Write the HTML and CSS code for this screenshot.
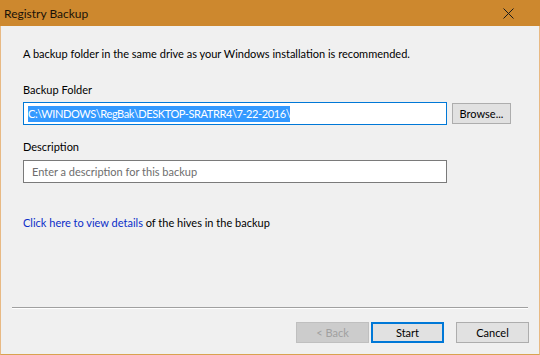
FILE: index.html
```html
<!DOCTYPE html>
<html>
<head>
<meta charset="utf-8">
<link rel="stylesheet" href="styles.css">
</head>
<body>
<div class="window">
  <div class="titlebar">
    <span class="title">Registry Backup</span>
    <svg class="close" width="11" height="11" viewBox="0 0 11 11"><path d="M0.5 0.5L10.5 10.5M10.5 0.5L0.5 10.5" stroke="#1a1a1a" stroke-width="1"/></svg>
  </div>
  <div class="content">
    <p class="intro">A backup folder in the same drive as your Windows installation is recommended.</p>
    <div class="label first">Backup Folder</div>
    <div class="row">
      <div class="input focused"><span class="sel">C:\WINDOWS\RegBak\DESKTOP-SRATRR4\7-22-2016\</span></div>
      <div class="btn browse">Browse...</div>
    </div>
    <div class="label second">Description</div>
    <div class="row row-desc">
      <div class="input plain"><span class="ph">Enter a description for this backup</span></div>
    </div>
    <p class="details"><span class="link">Click here to view details</span> of the hives in the backup</p>
  </div>
  <div class="sep"></div>
  <div class="footer">
    <div class="btn disabled">&lt; Back</div>
    <div class="btn default">Start</div>
    <div class="btn cancel">Cancel</div>
  </div>
</div>
</body>
</html>
```
FILE: styles.css
```css
html, body {
  margin: 0;
  padding: 0;
  background: #f0f0f0;
}
.window {
  width: 540px;
  height: 355px;
  box-sizing: border-box;
  background: #f0f0f0;
  border-left: 1px solid #e8b983;
  border-right: 1px solid #e8b983;
  border-bottom: 1px solid #d9a24f;
  display: flex;
  flex-direction: column;
  font-family: "Lato", "Noto Sans", sans-serif;
  font-size: 11px;
  color: #000;
}
.titlebar {
  height: 26px;
  flex: none;
  background: #cd882e;
  margin: 0 -1px;
  display: flex;
  align-items: center;
  justify-content: space-between;
  padding: 0 26px 0 4px;
}
.title {
  color: #1a1208;
  font-size: 12px;
}
.content {
  padding: 0 0 0 22px;
  flex: 1;
}
.intro {
  margin: 20px 0 0 0;
  line-height: 16px;
}
.label {
  line-height: 16px;
}
.label.first { margin-top: 20px; }
.label.second { margin-top: 14px; }
.row {
  display: flex;
  gap: 5px;
  margin-top: 4px;
}
.row-desc {
  margin-top: 5px;
}
.input {
  box-sizing: border-box;
  width: 424px;
  height: 23px;
  background: #fff;
  display: flex;
  align-items: center;
}
.input.focused {
  border: 1px solid #0078d7;
  padding-left: 4px;
}
.input.plain {
  border: 1px solid #7a7a7a;
  padding-left: 8px;
}
.sel {
  background: #3399ff;
  color: #fff;
  line-height: 16px;
  letter-spacing: -0.4px;
}
.ph {
  color: #6d6d6d;
}
.btn {
  box-sizing: border-box;
  height: 21px;
  background: #e1e1e1;
  border: 1px solid #adadad;
  display: flex;
  align-items: center;
  justify-content: center;
}
.browse {
  width: 59px;
  margin-top: 1px;
}
.details {
  margin: 32px 0 0 0;
  line-height: 16px;
}
.link {
  color: #0b2ec9;
}
.sep {
  flex: none;
  height: 1px;
  background: #a0a0a0;
  border-bottom: 1px solid #fff;
  margin: 0 11px 0 11px;
}
.footer {
  flex: none;
  display: flex;
  justify-content: flex-end;
  padding: 13px 10px 11px 0;
}
.footer .btn {
  width: 73px;
}
.disabled {
  background: #cccccc;
  border-color: #bfbfbf;
  color: #a0a0a0;
}
.default {
  border: 2px solid #0078d7;
  margin-left: 2px;
}
.cancel {
  margin-left: 12px;
}
```
